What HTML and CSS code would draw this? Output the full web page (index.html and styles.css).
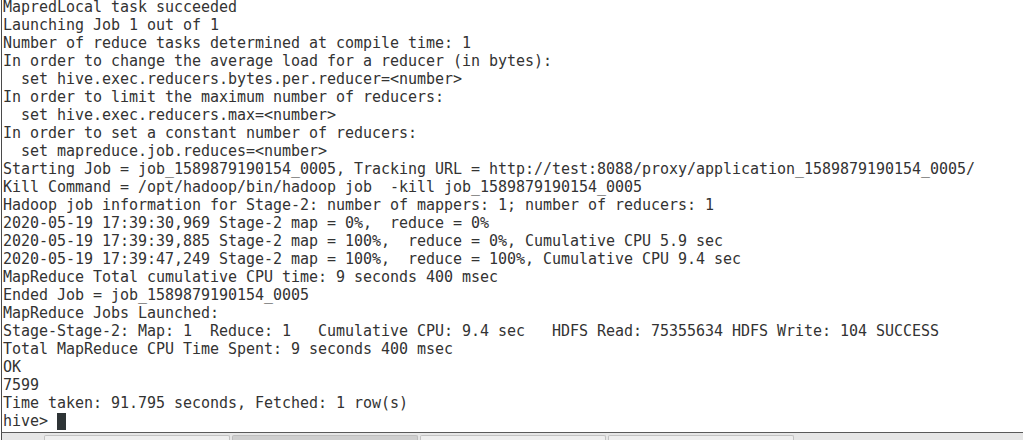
FILE: index.html
```html
<!DOCTYPE html>
<html>
<head>
<meta charset="utf-8">
<link rel="stylesheet" href="styles.css">
</head>
<body>
<div class="window">
<div class="terminal">
<pre class="output">MapredLocal task succeeded
Launching Job 1 out of 1
Number of reduce tasks determined at compile time: 1
In order to change the average load for a reducer (in bytes):
  set hive.exec.reducers.bytes.per.reducer=&lt;number&gt;
In order to limit the maximum number of reducers:
  set hive.exec.reducers.max=&lt;number&gt;
In order to set a constant number of reducers:
  set mapreduce.job.reduces=&lt;number&gt;
Starting Job = job_1589879190154_0005, Tracking URL = http://test:8088/proxy/application_1589879190154_0005/
Kill Command = /opt/hadoop/bin/hadoop job  -kill job_1589879190154_0005
Hadoop job information for Stage-2: number of mappers: 1; number of reducers: 1
2020-05-19 17:39:30,969 Stage-2 map = 0%,  reduce = 0%
2020-05-19 17:39:39,885 Stage-2 map = 100%,  reduce = 0%, Cumulative CPU 5.9 sec
2020-05-19 17:39:47,249 Stage-2 map = 100%,  reduce = 100%, Cumulative CPU 9.4 sec
MapReduce Total cumulative CPU time: 9 seconds 400 msec
Ended Job = job_1589879190154_0005
MapReduce Jobs Launched:
Stage-Stage-2: Map: 1  Reduce: 1   Cumulative CPU: 9.4 sec   HDFS Read: 75355634 HDFS Write: 104 SUCCESS
Total MapReduce CPU Time Spent: 9 seconds 400 msec
OK
7599
Time taken: 91.795 seconds, Fetched: 1 row(s)
hive&gt; <span class="cursor"></span></pre>
</div>
<div class="tabbar">
<div class="tab tab-first"></div>
<div class="tab tab-active"></div>
<div class="tab"></div>
<div class="tab"></div>
</div>
</div>
</body>
</html>
```
FILE: styles.css
```css
html, body {
  margin: 0;
  padding: 0;
  background: #ffffff;
}

.window {
  width: 1023px;
  height: 440px;
  overflow: hidden;
  border-left: 1px solid #ffffff;
  box-sizing: border-box;
}

.terminal {
  height: 433px;
  border-left: 1px solid #4a4a4a;
  border-bottom: 1px solid #5a5a5a;
  box-sizing: border-box;
  overflow: hidden;
  padding-left: 1px;
}

.output {
  margin: -2px 0 0 0;
  font-family: "DejaVu Sans Mono", monospace;
  font-size: 15px;
  line-height: 18px;
  letter-spacing: -0.03px;
  color: #333333;
  white-space: pre;
}

.cursor {
  display: inline-block;
  width: 9px;
  height: 17px;
  background: #2e3436;
  vertical-align: -4px;
}

.tabbar {
  height: 7px;
  background: #e6e6e6;
  border-left: 1px solid #4a4a4a;
  display: flex;
  align-items: flex-end;
  padding-left: 42px;
  gap: 2px;
}

.tab {
  width: 184px;
  height: 4px;
  background: #eeeeee;
  border: 1px solid #c2c2c2;
  border-bottom: none;
  border-radius: 2px 2px 0 0;
}

.tab-active {
  background: #cfcfcf;
  border-color: #bdbdbd;
}
```
